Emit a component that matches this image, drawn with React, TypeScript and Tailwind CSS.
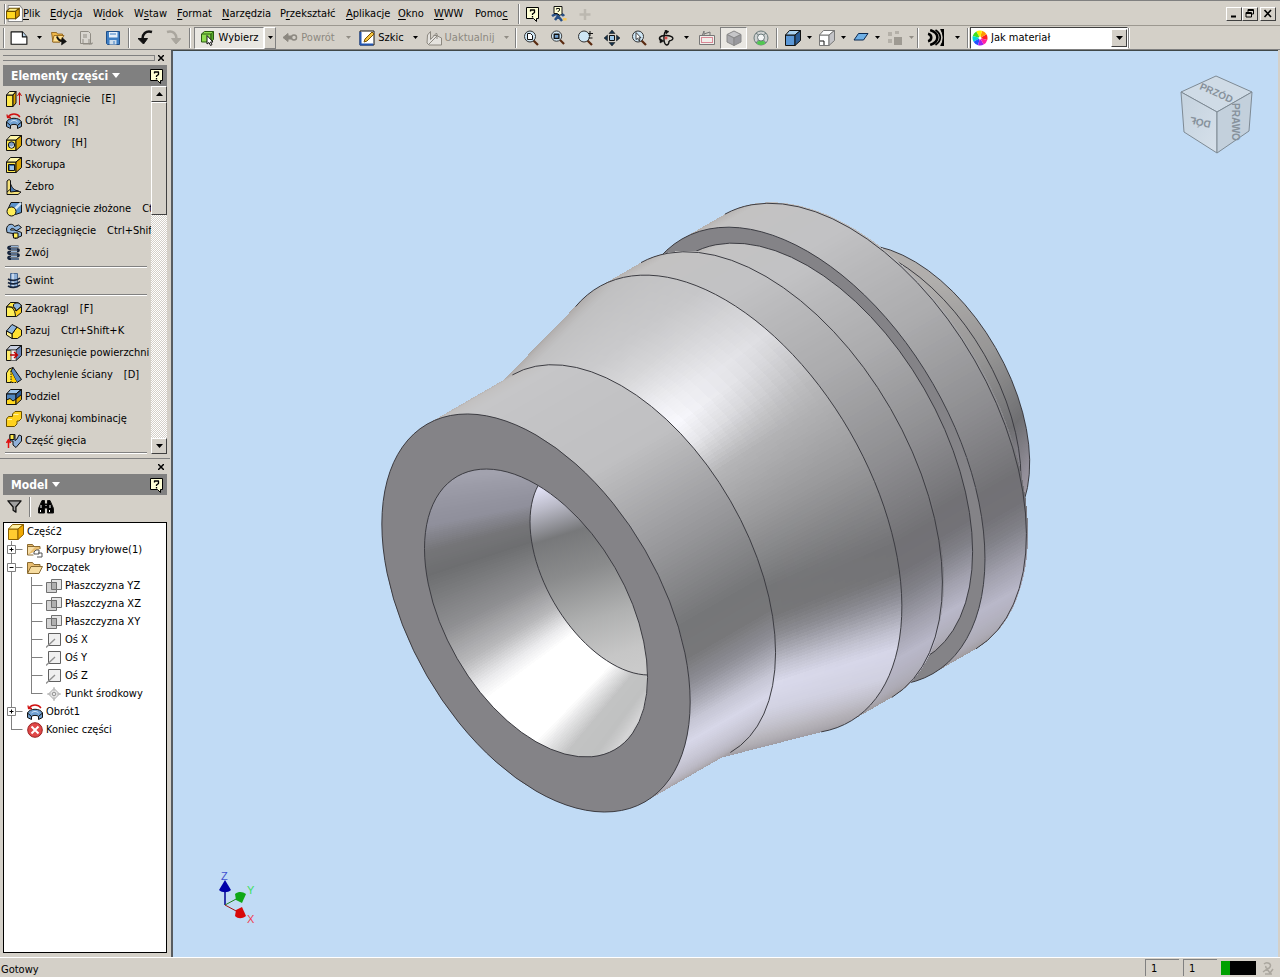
import React from "react";
import type { ReactNode } from "react";

/* ---------- small shared pieces ---------- */

function Icon({ children, size = 16 }: { children: ReactNode; size?: number }) {
  return (
    <svg width={size} height={size} viewBox="0 0 16 16" fill="none" stroke="#111" strokeWidth="1" strokeLinejoin="round" aria-hidden="true" className="shrink-0">
      {children}
    </svg>
  );
}

function Box({ front = "#ffe94a", top = "#fff7a8", side = "#d9a400", line = "#111" }: { front?: string; top?: string; side?: string; line?: string }) {
  return (
    <g stroke={line}>
      <path d="M.5 5h9.500v10.500H.5z" fill={front} />
      <path d="M.5 5l4-4.500h11L10 5z" fill={top} />
      <path d="M10 5l5.500-4.500v10L10 15.500z" fill={side} />
    </g>
  );
}

function Caret({ color = "#000" }: { color?: string }) {
  return (
    <svg width="5" height="3" viewBox="0 0 5 3" aria-hidden="true" className="shrink-0">
      <path d="M0 0h5L2.500 3z" fill={color} />
    </svg>
  );
}

function HelpIcon({ size = 16 }: { size?: number }) {
  return (
    <Icon size={size}>
      <path d="M1.500 1.500h12v11h-2v3l-3-3h-7z" fill="#ffffd5" stroke="#000" />
      <path d="M5.500 5.500V4h4v2.500L7.500 8v1M7.500 10v1.500" stroke="#000" strokeWidth="1.300" />
    </Icon>
  );
}

const Sep = () => <span className="h-5 w-[2px] border-l border-[#808080] border-r border-r-white" />;

/* ---------- feature icons ---------- */

const revolve = (
  <Icon>
    <path d="M.5 9c2-5 13-5 15 0v4.500l-4 2v-3c-1-1.500-6-1.500-7 0v3l-4-2z" fill="#6f9fd0" />
    <path d="M.5 9l4 3.500M15.500 9l-4 3.500" />
    <path d="M4.500 9c2-2 5-2 7 0" stroke="#d4e8fa" />
    <path d="M14 4C11 0 5 0 2 4M1 1.500L1.500 4.500H5" stroke="#d01010" strokeWidth="1.300" />
  </Icon>
);
const featureIcons: Record<string, ReactNode> = {
  extrude: (
    <Icon>
      <path d="M.5 4h6.500v11.500H.5z" fill="#ffe94a" />
      <path d="M.5 4l3-3.500H10L7 4z" fill="#fff7a8" />
      <path d="M7 4l3-3.500V12l-3 3.500z" fill="#d9a400" />
      <path d="M13.500 14V2M11.500 5l2-3.500 2 3.500" stroke="#c01010" />
    </Icon>
  ),
  revolve,
  hole: (
    <Icon>
      <Box />
      <circle cx="5.500" cy="10" r="3.200" fill="#7f9fc8" />
      <path d="M4 11.500a2 2 0 0 0 3.500-1" stroke="#fff" />
    </Icon>
  ),
  shell: (
    <Icon>
      <Box />
      <path d="M2.500 7.500h6v6h-6z" fill="#3a6ea5" />
      <path d="M4 9h4v4H4z" fill="#9cc4ea" stroke="none" />
    </Icon>
  ),
  rib: (
    <Icon>
      <path d="M1 2l2-1.500 1.500 1v9L15 13l-3 2.500H1z" fill="#f5e27a" />
      <path d="M4.500 4.500c1 4 4 7 8 7.500l-8 1z" fill="#4a78b0" />
      <path d="M1 13l3-2.500" />
    </Icon>
  ),
  loft: (
    <Icon>
      <path d="M5 1.500h10.500v10l-6 2L2 8z" fill="#5b93cc" />
      <path d="M15 2L9 8" stroke="#cfe4f7" strokeWidth="2.500" />
      <circle cx="5.500" cy="10.500" r="4.500" fill="#ffee58" />
    </Icon>
  ),
  sweep: (
    <Icon>
      <path d="M.5 6C1 .5 7 0 8.500 3.500l4-1.500 3 2.500-5.500 3.500C8 5 5 4.500 4.500 7H9l6.500 2.500V13L9 15.500 7 13v-2.500L1 9.500z" fill="#8fb5dd" />
      <path d="M7.500 10h4.500v5H7.500z" fill="#ffee58" />
    </Icon>
  ),
  coil: (
    <Icon>
      <path d="M12.500 1.500h-8c-3 0-3 2.500 0 2.500h6c3 0 3 2.500 0 2.500h-6c-3 0-3 2.500 0 2.500h6c3 0 3 2.500 0 2.500h-6C1.500 11.500 1.500 14 4.500 14H13" stroke="#16243c" strokeWidth="2.200" />
      <path d="M12.500 1.500H5M5 6.500h6M5 11.500h6M5 4h6M5 9h6M5 14h8" stroke="#a8c8ea" strokeWidth=".9" />
    </Icon>
  ),
  thread: (
    <Icon>
      <path d="M4.500.5h7V14h-7z" fill="#8fb0d8" stroke="#4a6890" />
      <path d="M7 .5V14" stroke="#fff" />
      <path d="M2 6c3 2 9 2 12-1M2 9.500c3 2 9 2 12-1M2 13c3 2 9 2 12-1" stroke="#16243c" strokeWidth="1.600" />
    </Icon>
  ),
  fillet: (
    <Icon>
      <path d="M.5 6l4-4.500h6l5 4v6l-5 4H.5z" fill="#ffd21e" />
      <path d="M.5 6C6 5 9 8 9.500 15.500H.5z" fill="#ffee58" />
      <path d="M4.500 1.500h6c3 .5 5 2 5 4L10 10C9.500 7 6 5 .5 6z" fill="#ffe94a" />
      <path d="M7.500 3.500c2-2 6-2.500 8 1.500L10 10c0-2-1-3.500-2.500-4.500z" fill="#8fb5dd" />
    </Icon>
  ),
  chamfer: (
    <Icon>
      <path d="M6 15.500V11L11 4l4.500 3v5.500l-4 3z" fill="#ffe030" />
      <path d="M.5 8L6 1.500 11 4l-5 7z" fill="#8fb5dd" />
      <path d="M.5 8v4L6 15.500V11z" fill="#fff08a" />
    </Icon>
  ),
  moveFace: (
    <Icon>
      <Box front="#ffec6a" top="#c8cfe0" side="#6a86b8" />
      <path d="M5 5h5v10.500H5z" fill="#f4f0f0" stroke="#666" />
      <path d="M4 10h7M8 7l3.500 3L8 13" stroke="#c00000" strokeWidth="1.500" />
    </Icon>
  ),
  draft: (
    <Icon>
      <path d="M.5 6L3 2l4-1.500L6 15.500H.5z" fill="#ffe94a" />
      <path d="M7 .5l8.500 12L11 15.500 5 4z" fill="#5d8cc2" />
      <path d="M5 4v11.500h6" fill="#ffd000" strokeDasharray="1.500 1" />
    </Icon>
  ),
  split: (
    <Icon>
      <Box front="#ffd820" top="#9cc4ea" side="#e0a800" />
      <path d="M.5 5H10v5L7 12 4 9.500.5 11z" fill="#4f86bf" />
      <path d="M10 5l5.500-4.500v5L10 10z" fill="#2f5f97" />
    </Icon>
  ),
  combine: (
    <Icon>
      <path d="M.5 8l2-2.500h4V3L9 .5h6.500v7L13 10h-2v3l-2.500 2.500h-8z" fill="#ffd21e" stroke="#6a5000" />
      <path d="M7.500 3.500H12.500M1.500 8.500H6" stroke="#fff3a0" />
    </Icon>
  ),
  bend: (
    <Icon>
      <path d="M4 1.500h5v6l2-1.500 2-4 2.500 1v5L10 14.500 7 12V8H4z" fill="#8fb0d8" />
      <path d="M4 1.500h4v5H4z" fill="#ffe94a" />
      <path d="M2.500 15V7M.5 10l2-3.500 2 3.500" stroke="#e01010" strokeWidth="1.500" />
    </Icon>
  ),
};

type Feature = { icon: string; label: string; keys?: string };
const featureGroups: Feature[][] = [
  [
    { icon: "extrude", label: "Wyciągnięcie", keys: "[E]" },
    { icon: "revolve", label: "Obrót", keys: "[R]" },
    { icon: "hole", label: "Otwory", keys: "[H]" },
    { icon: "shell", label: "Skorupa" },
    { icon: "rib", label: "Żebro" },
    { icon: "loft", label: "Wyciągnięcie złożone", keys: "Ctrl+Shift+L" },
    { icon: "sweep", label: "Przeciągnięcie", keys: "Ctrl+Shift+S" },
    { icon: "coil", label: "Zwój" },
  ],
  [{ icon: "thread", label: "Gwint" }],
  [
    { icon: "fillet", label: "Zaokrągl", keys: "[F]" },
    { icon: "chamfer", label: "Fazuj", keys: "Ctrl+Shift+K" },
    { icon: "moveFace", label: "Przesunięcie powierzchni" },
    { icon: "draft", label: "Pochylenie ściany", keys: "[D]" },
    { icon: "split", label: "Podziel" },
    { icon: "combine", label: "Wykonaj kombinację" },
    { icon: "bend", label: "Część gięcia" },
  ],
];

/* ---------- menu bar ---------- */

const menus = [
  { a: "", u: "P", b: "lik", w: "w-[27px]" },
  { a: "", u: "E", b: "dycja", w: "w-[43px]" },
  { a: "W", u: "i", b: "dok", w: "w-[41px]" },
  { a: "W", u: "s", b: "taw", w: "w-[43px]" },
  { a: "", u: "F", b: "ormat", w: "w-[45px]" },
  { a: "", u: "N", b: "arzędzia", w: "w-[58px]" },
  { a: "P", u: "r", b: "zekształć", w: "w-[66px]" },
  { a: "", u: "A", b: "plikacje", w: "w-[52px]" },
  { a: "", u: "O", b: "kno", w: "w-[36px]" },
  { a: "", u: "W", b: "WW", w: "w-[41px]" },
  { a: "Pomo", u: "c", b: "", w: "w-[43px]" },
];

function WinButton({ label, children }: { label: string; children: ReactNode }) {
  return (
    <button aria-label={label} className="flex h-[14px] w-4 items-center justify-center border border-white border-r-[#404040] border-b-[#404040] bg-[#d4d0c8]">
      <svg width="10" height="9" viewBox="0 0 10 9" fill="none" stroke="#000" aria-hidden="true">{children}</svg>
    </button>
  );
}

function MenuBar() {
  return (
    <header className="flex h-[26px] shrink-0 items-center border-t border-b border-t-[#808080] border-b-[#9c9890] bg-[#d4d0c8] pt-px pr-1 pl-1">
      <Sep />
      <Icon size={17}>
        <path d="M2 .5h11l2.500 3v12H2z" fill="#fff" stroke="#888" />
        <path d="M.5 6h8.500v7H.5z" fill="#ffd820" stroke="#6a4d00" />
        <path d="M.5 6l3-3h9l-3.500 3z" fill="#fff08a" stroke="#6a4d00" />
        <path d="M9 6l3.500-3v7L9 13z" fill="#d99a00" stroke="#6a4d00" />
      </Icon>
      <nav className="flex">
        {menus.map((m) => (
          <button key={m.a + m.u + m.b} className={`${m.w} text-left whitespace-nowrap`}>
            {m.a}
            <span className="underline underline-offset-2">{m.u}</span>
            {m.b}
          </button>
        ))}
      </nav>
      <Sep />
      <div className="flex items-center gap-[10px] pl-[5px]">
        <button aria-label="Pomoc"><HelpIcon /></button>
        <button aria-label="Asystent">
          <Icon>
            <path d="M1 10c4-3 10-3 12 0M4 14l3-4 4 5" stroke="#274f85" strokeWidth="2.500" />
            <path d="M3 .5h8v7l-2 2-3-2H3z" fill="#ffffd5" />
            <path d="M5.500 3.500v-1h3v2L7 5.500V6" />
            <path d="M12 12h3.500v2.500H12z" fill="#f4c860" stroke="none" />
          </Icon>
        </button>
        <Icon><path d="M8 3v11M2.500 8.500h11" stroke="#bcb8b0" strokeWidth="2.500" /></Icon>
      </div>
      <div className="ml-auto flex">
        <WinButton label="Minimalizuj"><path d="M2 7.500h5" strokeWidth="2" /></WinButton>
        <WinButton label="Przywróć"><path d="M3 .5h5.500v4.500H7M3 1.500h5.500M3 .5v3M1 3.500h5.500v4.500H1zM1 4.500h5.500" /></WinButton>
        <span className="w-[2px]" />
        <WinButton label="Zamknij"><path d="M1.500 1l6.500 7M8 1L1.500 8" strokeWidth="1.600" /></WinButton>
      </div>
    </header>
  );
}

/* ---------- toolbar ---------- */

function Tool({ label, w = "w-[27px]", pressed, children }: { label: string; w?: string; pressed?: boolean; children: ReactNode }) {
  return (
    <button
      aria-label={label}
      aria-pressed={pressed}
      className={`flex h-[22px] shrink-0 items-center justify-center ${w} ${pressed ? "border border-[#808080] border-r-white border-b-white bg-[#e9e7e2]" : ""}`}
    >
      {children}
    </button>
  );
}
function More({ w, off, framed }: { w: string; off?: boolean; framed?: boolean }) {
  return (
    <button aria-label="Więcej" className={`flex h-[22px] shrink-0 items-center justify-center ${w} ${framed ? "border border-white border-r-[#808080] border-b-[#808080]" : ""}`}>
      <Caret color={off ? "#908c84" : "#000"} />
    </button>
  );
}
function Gap({ w }: { w: string }) {
  return <span className={`flex shrink-0 justify-center ${w}`}><Sep /></span>;
}

const lens = (
  <>
    <path d="M10.500 10.500l4.500 4.500" stroke="#5a2a10" strokeWidth="2.200" />
    <circle cx="7" cy="6.500" r="5.500" fill="#cfe6f5" stroke="#333" />
  </>
);

function Toolbar() {
  return (
    <div className="flex h-6 shrink-0 items-center border-b border-[#808080] bg-[#d4d0c8] pl-[3px]">
      <Sep />
      <Tool label="Nowy" w="w-[28px]">
        <Icon size={18}><path d="M1 2.500h10L15 7v6.500H1z" fill="#fff" /><path d="M11 2.500V7h4" fill="#bcd8f0" /></Icon>
      </Tool>
      <More w="w-[12px]" />
      <Tool label="Otwórz">
        <Icon><path d="M.5 2.500h5l1 1.500h5V6L9 12H2z" fill="#f0b84a" stroke="#8a5a10" strokeWidth=".8" /><path d="M3 5.500h10L9 12H1.500z" fill="#ffdf90" stroke="#8a5a10" strokeWidth=".8" /><path d="M6 6.500c1 3.500 3 4.500 6 4.500" strokeWidth="2" /><path d="M11 7.500l4.500 4-5 3.500z" fill="#111" strokeWidth=".5" /></Icon>
      </Tool>
      <Tool label="Promuj">
        <Icon><path d="M2.500 1.500h8l2 2v10h-10z" fill="#d9d6d0" stroke="#908c84" /><path d="M5 5h4M5 7h4M5 9v5h9M11 9v5l4-1" stroke="#908c84" /></Icon>
      </Tool>
      <Tool label="Zapisz">
        <Icon><path d="M1.500 1.500h13v13h-12l-1-1z" fill="#3f7fc4" stroke="#1e4f8a" /><path d="M4 2h8.500v5.500H4z" fill="#e6f0fa" stroke="none" /><path d="M4.500 10h7v4.500h-7z" fill="#cdddec" stroke="none" /><path d="M9 11v3M5 4h6" stroke="#3f7fc4" /></Icon>
      </Tool>
      <Gap w="w-[6px]" />
      <Tool label="Cofnij"><Icon><path d="M14 2C8 0 4 4 4.500 10" strokeWidth="2.400" /><path d="M0 8.500h9.500L5.500 14z" fill="#111" /></Icon></Tool>
      <Tool label="Ponów"><Icon><path d="M2 2c6-2 10 2 9.500 8" stroke="#aaa69e" strokeWidth="2.400" /><path d="M6.500 8.500H16L11 14z" fill="#aaa69e" stroke="#aaa69e" /></Icon></Tool>
      <Gap w="w-[8px]" />
      <Tool label="Wybierz" pressed w="w-[70px]">
        <span className="flex items-center gap-[3px]">
          <Icon><path d="M1.500 4l3-2.500h9l-2.500 2.500V12H1.500z" fill="#8fdc50" stroke="#2a5a10" /><path d="M11 4H1.500M11 4v8l2.500-2.500v-8" fill="#57a82a" stroke="#2a5a10" /><path d="M7 5.500v8.500l2-1.500 1.500 3 1.500-.8-1.500-2.700H13z" fill="#fff" /></Icon>
          Wybierz
        </span>
      </Tool>
      <More w="w-[12px]" framed />
      <Tool label="Powrót" w="w-[65px]">
        <span className="flex items-center gap-[3px] text-[#8c8880]">
          <Icon><path d="M1 7.500l5-4v2.500h3v3H6v2.500z" fill="#8c8880" stroke="#8c8880" /><circle cx="12" cy="7.500" r="2.500" stroke="#8c8880" strokeWidth="1.500" /></Icon>
          Powrót
        </span>
      </Tool>
      <More w="w-[14px]" off />
      <Tool label="Szkic" w="w-[53px]">
        <span className="flex items-center gap-[3px]">
          <Icon><path d="M1 1h14v14H1z" fill="#fff" /><path d="M1.500 2v12.500H14" stroke="#2255b0" strokeWidth="2" /><path d="M5 12l1-3 7-7 2 2-7 7z" fill="#f5c542" stroke="#7a5200" /></Icon>
          Szkic
        </span>
      </Tool>
      <More w="w-[14px]" />
      <Tool label="Uaktualnij" w="w-[76px]">
        <span className="flex items-center gap-[3px] text-[#8c8880]">
          <Icon><path d="M1.500 5l3-3.500v8l6-6.500 1 3 4 2v7H3L1 13z" fill="#e4e2de" stroke="#8c8880" /><path d="M3 14l8-8M7.500 5.500H11V9" stroke="#8c8880" /></Icon>
          Uaktualnij
        </span>
      </Tool>
      <More w="w-[16px]" off />
      <Gap w="w-[3px]" />
      <Tool label="Pokaż wszystko"><Icon>{lens}<path d="M4.500 3.500h3l2 2v4h-5z" fill="#fff" /></Icon></Tool>
      <Tool label="Okno powiększenia"><Icon size={15}>{lens}<path d="M4.500 4.500h5v4.500h-5z" fill="#6fa0d0" strokeWidth="1.400" /></Icon></Tool>
      <Tool label="Powiększ"><Icon>{lens}<path d="M13 1v5M11 3.500h5M11.500 8h4" /></Icon></Tool>
      <Tool label="Przesuń">
        <Icon><path d="M5.500 5.500h5v5h-5z" fill="#9cc8ea" /><path d="M8 0l3 3.500H5zM8 16l3-3.500H5zM0 8l3.500-3v6zM16 8l-3.500-3v6z" fill="#16324a" strokeWidth=".5" /></Icon>
      </Tool>
      <Tool label="Powiększ wybrane"><Icon>{lens}<path d="M5 2.500v7l1.500-1.200 1.500 2.500 1-.7-1.200-2.300H10z" fill="#fff" strokeWidth=".8" /></Icon></Tool>
      <Tool label="Orbita">
        <Icon><path d="M9 1C5 1 5 14 8.500 15c2 0 2.500-2 2.500-4" strokeWidth="1.400" /><path d="M11 11c6-1 5-5-2.500-5.500C1 5 0 9 3 10.500" strokeWidth="1.400" /><path d="M7 0l4 1.500L8 4zM2 8.500l4 2.500-4 2z" fill="#111" strokeWidth=".5" /><path d="M6.500 8h3M8 6.500v3" stroke="#e02020" /></Icon>
      </Tool>
      <More w="w-[14px]" />
      <Tool label="Patrz na"><Icon><path d="M3 6L5 1v5M5 4l6-2v4" stroke="#777" /><path d="M.5 5.500h15v9H.5z" fill="#f1eeea" stroke="#777" /><path d="M2.500 7.500h11v5h-11z" stroke="#c02040" strokeDasharray="1 1" /></Icon></Tool>
      <Tool label="Kostka widoku" pressed><Icon><g stroke="#888"><path d="M1 4.500L8 1l7 3.500-7 3.500z" fill="#c6c6c8" /><path d="M1 4.500V12l7 3.500V8z" fill="#a9a9ad" /><path d="M15 4.500V12l-7 3.500V8z" fill="#98989d" /></g></Icon></Tool>
      <Tool label="Koło nawigacji"><Icon><circle cx="8" cy="8" r="7" fill="#cfd2d2" stroke="#6a7a7a" /><path d="M3.500 13c2 2.500 7 2.500 9 0L10 10.500H6z" fill="#50c850" stroke="none" /><circle cx="8" cy="7.500" r="3.500" fill="#f4f6f6" stroke="#6a7a7a" /><path d="M3 3l2.500 2M13 3l-2.500 2M3 13l2.500-3M13 13l-2.500-3" stroke="#6a7a7a" /></Icon></Tool>
      <Gap w="w-[5px]" />
      <Tool label="Styl cieniowania"><Icon><Box front="#5b97d6" top="#a8d0f0" side="#2a5c96" /></Icon></Tool>
      <More w="w-[7px]" />
      <Tool label="Widok prostokątny"><Icon><Box front="#fff" top="#fff" side="#c4c4c8" line="#777" /><path d="M1 11h4v4" stroke="#111" /></Icon></Tool>
      <More w="w-[7px]" />
      <Tool label="Cień podłoża"><Icon><path d="M5.500 3.500h9.500L10.500 10H1z" fill="#6fb0e6" stroke="#0a2850" /></Icon></Tool>
      <More w="w-[7px]" />
      <Tool label="Nieprzezroczystość"><Icon><g fill="#b4b0a8" stroke="none"><path d="M1 2h4v4H1zM8 1h4v3H8zM1 9h4v4H1z" /><path d="M7 7h8v8H7z" fill="#9e9a92" /></g></Icon></Tool>
      <More w="w-[7px]" off />
      <Gap w="w-[6px]" />
      <Tool label="Analiza" w="w-[28px]">
        <Icon size={17}><path d="M13 .5h3v15h-3C16 11 16 5 13 .5z" fill="#000" stroke="#000" /><path d="M1 4.500c4 1 4 6 0 7M3 1c9 3 9 11 0 14" strokeWidth="2.400" stroke="#000" /><path d="M8 1c6 4 6 10 0 14" strokeWidth="1.600" stroke="#000" /></Icon>
      </Tool>
      <More w="w-[16px]" />
      <Gap w="w-[5px]" />
      <div className="relative flex h-[22px] w-[158px] shrink-0 items-center border border-[#404040] border-r-white border-b-white bg-white">
        <svg width="16" height="16" viewBox="-8 -8 16 16" aria-hidden="true" className="ml-px shrink-0">
          {["#ff2020", "#ff9a00", "#fff200", "#40e020", "#00d8d8", "#2050ff", "#a020f0", "#ff20a0"].map((c, i) => (
            <path key={c} d="M0 0L7.500 0A7.500 7.500 0 0 1 5.300 5.300z" fill={c} transform={`rotate(${-i * 45 - 30})`} />
          ))}
          <circle r="1.500" fill="#fff" />
        </svg>
        <select aria-label="Styl materiału" className="h-full min-w-0 flex-1 appearance-none bg-transparent pl-[3px] outline-none">
          <option>Jak materiał</option>
        </select>
        <span className="pointer-events-none flex h-[18px] w-4 items-center justify-center border border-white border-r-[#404040] border-b-[#404040] bg-[#d4d0c8]">
          <svg width="7" height="4" viewBox="0 0 7 4" aria-hidden="true"><path d="M0 0h7L3.500 4z" /></svg>
        </span>
      </div>
      <Sep />
    </div>
  );
}

/* ---------- side panels ---------- */

const CloseX = ({ label }: { label: string }) => (
  <button aria-label={label} className="flex h-3 w-3 items-center justify-center">
    <svg width="6" height="6" viewBox="0 0 6 6" stroke="#000" strokeWidth="1.500" aria-hidden="true"><path d="M0 0l6 6M6 0L0 6" /></svg>
  </button>
);

function PanelTitle({ children }: { children: string }) {
  return (
    <div className="flex h-[21px] shrink-0 items-center justify-between bg-[#808080] pr-[2px] pl-2 text-white">
      <button className="flex items-center gap-1 text-[12px] font-bold">
        {children}
        <svg width="8" height="5" viewBox="0 0 8 5" aria-hidden="true"><path d="M0 0h8L4 5z" fill="#fff" /></svg>
      </button>
      <button aria-label={`Pomoc: ${children}`}><HelpIcon /></button>
    </div>
  );
}

const Line = () => <div className="mr-1 ml-[2px] h-[2px] border-t border-[#808080] border-b border-b-white" />;

function ScrollBtn({ up }: { up?: boolean }) {
  return (
    <button aria-label={up ? "W górę" : "W dół"} className="flex h-4 w-full items-center justify-center border border-white border-r-[#404040] border-b-[#404040] bg-[#d4d0c8]">
      <svg width="7" height="4" viewBox="0 0 7 4" aria-hidden="true"><path d={up ? "M0 4h7L3.500 0z" : "M0 0h7L3.500 4z"} /></svg>
    </button>
  );
}

function FeaturePanel() {
  return (
    <section className="flex shrink-0 flex-col px-[3px] pt-px pb-1">
      <div className="flex h-[14px] items-center">
        <div className="h-[6px] flex-1 border-t border-b border-t-[#808080] border-b-[#808080] border-r border-r-[#808080]" />
        <CloseX label="Zamknij elementy części" />
      </div>
      <PanelTitle>Elementy części</PanelTitle>
      <div className="flex">
        <ul className="min-w-0 flex-1 overflow-hidden pt-[2px]">
          {featureGroups.map((g, i) => (
            <React.Fragment key={i}>
              {g.map((f) => (
                <li key={f.label}>
                  <button className="flex h-[22px] items-center gap-[3px] pl-[3px] whitespace-nowrap">
                    {featureIcons[f.icon]}
                    <span>{f.label}</span>
                    {f.keys && <span className="pl-2">{f.keys}</span>}
                  </button>
                </li>
              ))}
              <li aria-hidden="true" className={i < 2 ? "py-[2px]" : ""}><Line /></li>
            </React.Fragment>
          ))}
        </ul>
        <div className="flex w-4 shrink-0 flex-col bg-[repeating-conic-gradient(#ffffff_0_25%,#d4d0c8_0_50%)] bg-[length:2px_2px]">
          <ScrollBtn up />
          <div className="h-[113px] border border-white border-r-[#404040] border-b-[#404040] bg-[#d4d0c8]" />
          <div className="flex-1" />
          <ScrollBtn />
        </div>
      </div>
    </section>
  );
}

/* tree connectors */
function Link({ kind, w, x }: { kind: "plus" | "minus" | "tee" | "end" | "line"; w: number; x: number }) {
  const boxed = kind === "plus" || kind === "minus";
  return (
    <svg width={w} height="18" viewBox={`0 0 ${w} 18`} fill="none" stroke="#808080" aria-hidden="true" className="shrink-0">
      <path d={`M${x} 0V${kind === "end" ? 9 : 18}`} />
      {kind !== "line" && <path d={`M${x} 8.500H${x + 11}`} />}
      {boxed && <path d={`M${x - 4} 4.500h8v8h-8z`} fill="#fff" />}
      {boxed && <path d={`M${x - 2} 8.500h4`} stroke="#000" />}
      {kind === "plus" && <path d={`M${x} 6.500v4`} stroke="#000" />}
    </svg>
  );
}

const planeIcon = (
  <Icon><path d="M5.500 1.500h10v10h-10z" fill="#e6e6e6" stroke="#707070" /><path d="M.5 4.500h10v10H.5z" fill="#c8c8c8" fillOpacity=".8" stroke="#707070" /><path d="M5.500 4.500h5v7h-5z" fill="#b0b0b0" stroke="#707070" /></Icon>
);
const axisIcon = <Icon><path d="M2.500 1.500h12v12h-12z" fill="#f0f0f0" stroke="#606060" /><path d="M0 15.500L9 7" stroke="#909090" strokeWidth="1.300" /></Icon>;
const folder = <path d="M.5 13V2.500h5l1.500 2h6V7" fill="#e8bd70" stroke="#8a6a30" />;

type Node = { links: ReactNode; icon: ReactNode; text: string };
const root = (k: "plus" | "minus" | "end" | "line") => <Link kind={k} w={23} x={7.5} />;
const leaf = (k: "tee" | "end") => (
  <>
    {root("line")}
    <Link kind={k} w={19} x={4.5} />
  </>
);
const tree: Node[] = [
  { links: <span className="w-1" />, icon: <Icon><Box front="#ffcc30" top="#fff0a0" side="#f0a800" line="#8a6000" /></Icon>, text: "Część2" },
  { links: root("plus"), icon: <Icon>{folder}<path d="M.5 13V4.500h8" fill="#f8dfa8" stroke="#8a6a30" /><path d="M.5 13h6" stroke="#8a6a30" /><path d="M7 10l2-2h3v4H7zM11 11h4v4h-5" fill="#fff" stroke="#555" /></Icon>, text: "Korpusy bryłowe(1)" },
  { links: root("minus"), icon: <Icon>{folder}<path d="M.5 13.500L4 6.500h11.500L12 13.500z" fill="#f6dca0" stroke="#8a6a30" /></Icon>, text: "Początek" },
  { links: leaf("tee"), icon: planeIcon, text: "Płaszczyzna YZ" },
  { links: leaf("tee"), icon: planeIcon, text: "Płaszczyzna XZ" },
  { links: leaf("tee"), icon: planeIcon, text: "Płaszczyzna XY" },
  { links: leaf("tee"), icon: axisIcon, text: "Oś X" },
  { links: leaf("tee"), icon: axisIcon, text: "Oś Y" },
  { links: leaf("tee"), icon: axisIcon, text: "Oś Z" },
  { links: leaf("end"), icon: <Icon><path d="M8 2.500L13.500 8 8 13.500 2.500 8z" fill="#e8e8e8" stroke="#a8a8a8" /><circle cx="8" cy="8" r="1.800" stroke="#909090" /><path d="M8 1v4M8 11v4M1 8h4M11 8h4" stroke="#b0b0b0" /></Icon>, text: "Punkt środkowy" },
  { links: root("plus"), icon: revolve, text: "Obrót1" },
  { links: root("end"), icon: <Icon><circle cx="8" cy="8" r="7.300" fill="#e04848" stroke="#9a2020" /><path d="M4.500 4.500l7 7M11.500 4.500l-7 7" stroke="#fff" strokeWidth="2" /></Icon>, text: "Koniec części" },
];

function ModelPanel() {
  return (
    <section className="flex min-h-0 flex-1 flex-col border-t border-[#808080] px-[3px] pb-1">
      <div className="flex h-[15px] shrink-0 items-center justify-end"><CloseX label="Zamknij model" /></div>
      <PanelTitle>Model</PanelTitle>
      <div className="flex h-[27px] shrink-0 items-center gap-[7px] pb-1 pl-1">
        <button aria-label="Filtr"><Icon size={15}><path d="M1 2h14L9.500 8.500V14l-3-2V8.500z" fill="#a0a0a0" strokeWidth="1.400" /></Icon></button>
        <Sep />
        <button aria-label="Znajdź">
          <Icon><path d="M4 1.500h2.500V5h3V1.500H12l3.500 8V14H9.500V9h-3v5H.5V9.500z" fill="#000" /><path d="M3 6v3M12 6v3M2.500 11v2M11.500 11v2M8 6v1" stroke="#fff" /></Icon>
        </button>
      </div>
      <div className="min-h-0 flex-1 overflow-hidden border border-black bg-white">
        <ul>
          {tree.map((n) => (
            <li key={n.text} className="flex h-[18px] items-center whitespace-nowrap">
              {n.links}
              {n.icon}
              <a href="#" className="pl-[3px]">{n.text}</a>
            </li>
          ))}
        </ul>
      </div>
    </section>
  );
}

/* ---------- 3D part ---------- */

type Stop = [number, string];
type Ring = { t: number; r: number };
const OX = 536;
const OY = 613;
const AXIS = { x: Math.cos(Math.PI / 6), y: -0.5 };
const center = (t: number) => ({ x: OX + t, y: OY - t / Math.sqrt(3) });

function at({ t, r }: Ring, deg: number) {
  const a = (deg * Math.PI) / 180;
  const c = center(t);
  const u = r * Math.cos(a);
  const v = (r * Math.sin(a)) / Math.sqrt(3);
  return { x: c.x + u * 0.5 + v * AXIS.x, y: c.y + u * 0.866 + v * AXIS.y };
}
const p = (q: { x: number; y: number }) => `${q.x.toFixed(1)} ${q.y.toFixed(1)}`;

const rgb = (h: string) => [1, 3, 5].map((i) => parseInt(h.slice(i, i + 2), 16));
const blend = (a: number[], b: number[], k: number) => a.map((v, i) => v + (b[i] - v) * k);
function shade(stops: Stop[], deg: number) {
  if (deg <= stops[0][0]) return rgb(stops[0][1]);
  for (let i = 1; i < stops.length; i++) {
    if (deg <= stops[i][0]) {
      const k = (deg - stops[i - 1][0]) / (stops[i][0] - stops[i - 1][0]);
      return blend(rgb(stops[i - 1][1]), rgb(stops[i][1]), k);
    }
  }
  return rgb(stops[stops.length - 1][1]);
}

/* Surface of revolution between two rings, shaded by angle around the axis. */
function Surface({ a, b, near, far = near, from = -90, to = 270, parts = 1 }: { a: Ring; b: Ring; near: Stop[]; far?: Stop[]; from?: number; to?: number; parts?: number }) {
  const step = 1;
  const out: { k: string; d: string; c: string; z: number }[] = [];
  for (let s = 0; s < parts; s++) {
    const m = (k: number): Ring => ({ t: a.t + (b.t - a.t) * k, r: a.r + (b.r - a.r) * k });
    const r0 = m(s / parts);
    const r1 = m((s + 1) / parts);
    for (let g = from; g < to; g += step) {
      const col = blend(shade(near, g), shade(far, g), (s + 0.5) / parts).map(Math.round);
      out.push({
        k: `${s}-${g}`,
        d: `M${p(at(r0, g))}L${p(at(r1, g))}L${p(at(r1, g + step))}L${p(at(r0, g + step))}z`,
        c: `rgb(${col.join(",")})`,
        z: Math.sin((g * Math.PI) / 180),
      });
    }
  }
  out.sort((x, y) => x.z - y.z);
  return <g shapeRendering="crispEdges">{out.map((o) => <path key={o.k} d={o.d} fill={o.c} />)}</g>;
}

const INK = "#3c3c42";
function arc(ring: Ring, from: number, to: number) {
  return `A${ring.r} ${ring.r / Math.sqrt(3)} 60 ${to - from > 180 ? 1 : 0} 0 ${p(at(ring, to))}`;
}
function Edge({ ring, from = 0, to = 180 }: { ring: Ring; from?: number; to?: number }) {
  return <path d={`M${p(at(ring, from))}${arc(ring, from, to)}`} fill="none" stroke={INK} />;
}
const loop = (ring: Ring) => `M${p(at(ring, 0))}${arc(ring, 0, 120)}${arc(ring, 120, 240)}${arc(ring, 240, 360)}z`;
function Disc({ ring, fill }: { ring: Ring; fill: string }) {
  return <path d={loop(ring)} fill={fill} stroke={INK} />;
}

const front: Ring = { t: 0, r: 218 };
const neck: Ring = { t: 85.4, r: 218 };
const coneEnd: Ring = { t: 188.5, r: 251 };
const lip: Ring = { t: 230.5, r: 251 };
const grooveA: Ring = { t: 230.5, r: 233.5 };
const grooveB: Ring = { t: 271.5, r: 233.5 };
const collar: Ring = { t: 271.5, r: 251 };
const bodyEnd: Ring = { t: 314.5, r: 251 };
const tailA: Ring = { t: 314.5, r: 178 };
const tailB: Ring = { t: 359.6, r: 178 };
const tailEnd: Ring = { t: 377, r: 165 };
const mouth: Ring = { t: 0, r: 157.7 };
const throat: Ring = { t: 76, r: 116 };

const neckTone: Stop[] = [[0, "#a29da0"], [14, "#bcbac6"], [30, "#d7d7e8"], [38, "#c6c6d4"], [50, "#8e8e96"], [58, "#777779"], [67, "#757678"], [88, "#98989b"], [115, "#c0c0c2"], [160, "#c6c6c8"], [172, "#c2c0c0"], [180, "#b4afad"]];
const coneNear: Stop[] = [[-12, "#98949a"], [8, "#b8b6bc"], [24, "#d2d2e2"], [34, "#dadaec"], [40, "#c4c4d2"], [50, "#8c8c92"], [56, "#767678"], [64, "#747577"], [82, "#98989a"], [98, "#b6b6b8"], [108, "#e8e8ec"], [115, "#fafaff"], [122, "#f0f0f4"], [134, "#d8d8da"], [146, "#cbcbcd"], [170, "#c2c2c3"], [190, "#aaa5a3"]];
const coneFar: Stop[] = [[-12, "#98949a"], [8, "#b4b1b8"], [22, "#d0d0e0"], [32, "#d6d6e8"], [38, "#c0c0ce"], [48, "#8a8a92"], [54, "#747477"], [61, "#737376"], [82, "#98989a"], [104, "#b8b8ba"], [120, "#dcdce0"], [130, "#d2d2d5"], [142, "#c6c6c8"], [170, "#c0c0c1"], [190, "#aaa5a3"]];
const bodyTone: Stop[] = [[0, "#9c9798"], [14, "#adabb6"], [28, "#b9b8c9"], [38, "#a2a1ae"], [48, "#808087"], [54, "#737277"], [61, "#727175"], [80, "#8e8e91"], [105, "#acacae"], [135, "#c2c2c4"], [165, "#c3c2c2"], [180, "#b2adaa"]];
const tailTone: Stop[] = [[20, "#a8a2a8"], [45, "#918d98"], [64, "#6f6f72"], [90, "#979696"], [120, "#b0aeac"], [160, "#b4b0ae"]];
const boreTone: Stop[] = [[180, "#a2a2ae"], [214, "#8f8f9b"], [226, "#757578"], [236, "#6d6e70"], [258, "#8f8f92"], [272, "#b8b8ba"], [282, "#ebebed"], [288, "#ffffff"], [314, "#ffffff"], [321, "#e2e2e3"], [330, "#c2c3c3"], [346, "#c0c1c1"], [362, "#d4d4d5"], [400, "#c0c0c0"]];

function Viewport() {
  return (
    <main className="min-w-0 flex-1 overflow-hidden border-t border-l-2 border-t-[#404848] border-l-[#585c60] bg-[#c1dbf5]">
      <svg viewBox="173 51 1105 906" className="h-full w-full" role="img" aria-label="Model części 3D">
        <defs>
          <clipPath id="mouth"><path d={loop(mouth)} /></clipPath>
          <linearGradient id="bore" gradientUnits="userSpaceOnUse" x1="555" y1="485" x2="615" y2="675">
            <stop offset="0" stopColor="#dedef2" />
            <stop offset=".1" stopColor="#b9b9c6" />
            <stop offset=".25" stopColor="#77787a" />
            <stop offset=".45" stopColor="#8a8b8c" />
            <stop offset=".7" stopColor="#b0b1b1" />
            <stop offset=".9" stopColor="#c6c6c6" />
            <stop offset="1" stopColor="#cacaca" />
          </linearGradient>
          <linearGradient id="cubeL" x1="0" y1="0" x2="1" y2="1"><stop stopColor="#c4d2de" /><stop offset="1" stopColor="#d6e0ea" /></linearGradient>
        </defs>

        <Surface a={tailB} b={tailEnd} near={tailTone} />
        <Edge ring={tailEnd} from={-10} to={190} />
        <Surface a={tailA} b={tailB} near={tailTone} />
        <Edge ring={tailB} />
        <Surface a={collar} b={bodyEnd} near={bodyTone} />
        <Edge ring={bodyEnd} />
        <Disc ring={collar} fill="#848387" />
        <Surface a={grooveA} b={grooveB} near={bodyTone} />
        <Edge ring={grooveB} />
        <Surface a={coneEnd} b={lip} near={bodyTone} />
        <Edge ring={lip} />
        <Surface a={neck} b={coneEnd} near={coneNear} far={coneFar} parts={12} />
        <Edge ring={coneEnd} from={-12} to={192} />
        <Surface a={front} b={neck} near={neckTone} />
        <Edge ring={neck} />
        <Disc ring={front} fill="#848387" />
        <g clipPath="url(#mouth)">
          <Surface a={mouth} b={throat} near={boreTone} from={160} to={400} />
          <Disc ring={throat} fill="url(#bore)" />
        </g>
        <Disc ring={mouth} fill="none" />

        <g stroke="#7e8a94" strokeLinejoin="round">
          <path d="M1181 92l35-16 36 16-35 20z" fill="#cfdbe6" />
          <path d="M1181 92l36 20v41l-33-21z" fill="url(#cubeL)" />
          <path d="M1252 92l-35 20v41l32-22z" fill="#c3d0dc" />
        </g>
        <g fontFamily="Liberation Sans, sans-serif" fontSize="10" fontWeight="700" fill="#87929c" textAnchor="middle">
          <text transform="translate(1215 96) rotate(24)">PRZÓD</text>
          <text transform="translate(1201 119) rotate(192)">DÓŁ</text>
          <text transform="translate(1232 122) rotate(90)">PRAWO</text>
        </g>

        <g>
          <path d="M225 905V890" stroke="#000090" strokeWidth="1.500" />
          <path d="M225 905l13-7" stroke="#208020" />
          <path d="M225 905l13 7" stroke="#a01010" />
          <path d="M225 880l6 10c-3 3-9 3-12 0z" fill="#0000a8" />
          <path d="M235 894c4-3 8-2 11 0l-4 9-6-3z" fill="#10a818" />
          <path d="M236 910l6-3 4 9c-4 3-8 3-11 0z" fill="#d80808" />
          <g fontFamily="Liberation Sans, sans-serif" fontSize="11">
            <text x="221" y="880" fill="#4050d0">Z</text>
            <text x="247" y="894" fill="#40e060">Y</text>
            <text x="247" y="923" fill="#f04050">X</text>
          </g>
        </g>
      </svg>
    </main>
  );
}

function StatusBar() {
  return (
    <footer className="flex h-5 shrink-0 items-center gap-1 border-t border-white bg-[#d4d0c8] pr-1 pl-px">
      <span className="flex-1 pt-1">Gotowy</span>
      <span className="h-[17px] w-[34px] border-t border-l border-[#808080] pl-[5px] leading-[17px]">1</span>
      <span className="h-[17px] w-[34px] border-t border-l border-[#808080] pl-[5px] leading-[17px]">1</span>
      <span className="flex h-[14px] w-[35px] bg-black"><span className="w-[9px] bg-[#00a000]" /></span>
      <Icon><path d="M4 4c3-3 8 0 6 3s-5 1-4-1M3 12l4-3 3 4 3-4M5 14h7" stroke="#aaa69e" strokeWidth="1.500" /></Icon>
    </footer>
  );
}

export default function App() {
  return (
    <div className="flex h-screen flex-col bg-[#d4d0c8] font-['Tahoma','DejaVu_Sans_Condensed','Liberation_Sans',sans-serif] text-[11px] leading-4 text-black">
      <MenuBar />
      <Toolbar />
      <div className="flex min-h-0 flex-1 pr-[2px]">
        <aside className="flex w-[171px] shrink-0 flex-col pr-px">
          <FeaturePanel />
          <ModelPanel />
        </aside>
        <Viewport />
      </div>
      <StatusBar />
    </div>
  );
}
